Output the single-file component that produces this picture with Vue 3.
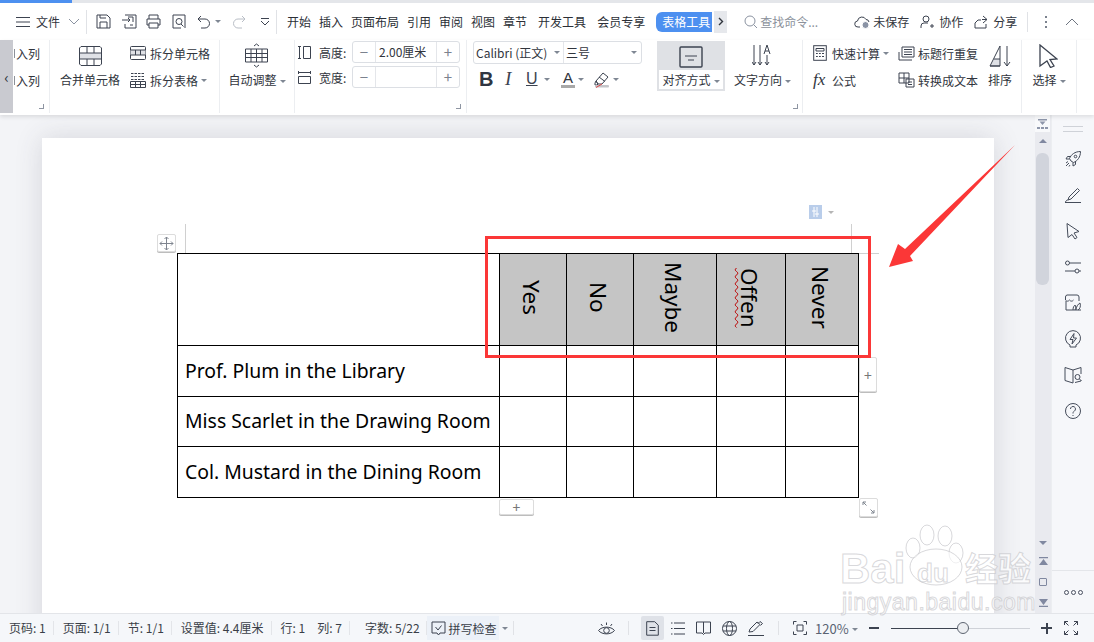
<script setup>
const menus = ['开始', '插入', '页面布局', '引用', '审阅', '视图', '章节']
const menus2 = ['开发工具', '会员专享']
const headers = ['Yes', 'No', 'Maybe', 'Offen', 'Never']
const rows = ['Prof. Plum in the Library', 'Miss Scarlet in the Drawing Room', 'Col. Mustard in the Dining Room']
const colWidths = [322, 67, 67, 83, 69, 73]
</script>

<template>
  <div class="app">
    <div class="tabstrip"><span class="tab-active"></span></div>

    <header class="menubar">
      <svg class="ic ham" width="14" height="10" viewBox="0 0 14 10"><path d="M0 .5h14M0 5h14M0 9.500h14" /></svg>
      <span class="file">文件</span>
      <svg class="ic chev" width="12" height="7" viewBox="0 0 12 7"><path d="M1 1l5 5 5-5" /></svg>
      <i class="vsep first"></i>
      <svg class="ic q-a" width="15" height="15" viewBox="0 0 15 15"><path d="M1 1h10l3 3v10H1zM4 14V8h7v6M4 1v3h6" /></svg>
      <svg class="ic q-b" width="15" height="15" viewBox="0 0 15 15"><path d="M3 1h11v13H3V10M0 6h8M6 4l2 2-2 2M6 3h5v5M8 11h3" /></svg>
      <svg class="ic q-a" width="15" height="15" viewBox="0 0 15 15"><path d="M3 5V1h9v4M3 11H1V5h13v6h-2M3 9h9v5H3z" /></svg>
      <svg class="ic q-b" width="14" height="15" viewBox="0 0 14 15"><path d="M9 14H1V1h12v13" /><circle cx="7" cy="7.500" r="3" /><path d="M9 10l2.500 2.500" /></svg>
      <svg class="ic undo" width="14" height="14" viewBox="0 0 14 14"><path d="M4 1L1 4l3 3M1 4h7a4.500 4.500 0 0 1 0 9H4" /></svg>
      <i class="caret undo-caret"></i>
      <svg class="ic redo" width="14" height="14" viewBox="0 0 14 14"><path d="M10 1l3 3-3 3M13 4H6a4.500 4.500 0 0 0 0 9h4" /></svg>
      <svg class="ic more" width="10" height="8" viewBox="0 0 10 8"><path d="M1 .5h8M1 3l4 4 4-4" /></svg>
      <i class="vsep second"></i>
      <nav class="tabs">
        <span v-for="m in menus" :key="m">{{ m }}</span>
        <span v-for="m in menus2" :key="m" class="wide">{{ m }}</span>
      </nav>
      <span class="tool-tab">表格工具</span>
      <span class="tool-next">
        <svg class="ic dark" width="6" height="9" viewBox="0 0 6 9"><path d="M1 1l3.500 3.500L1 8" /></svg>
      </span>
      <span class="search">
        <svg class="ic grey" width="14" height="14" viewBox="0 0 14 14"><circle cx="6" cy="6" r="5" /><path d="M9.500 9.500L13 13" /></svg>
        查找命令...
      </span>
      <span class="act first-act">
        <svg class="ic" width="17" height="14" viewBox="0 0 17 14"><path d="M6 12H4a3 3 0 0 1-.5-6A4.500 4.500 0 0 1 12 4.500a3 3 0 0 1 3 2.500" /><circle class="filled" cx="11.500" cy="10" r="3.500" /></svg>
        未保存
      </span>
      <span class="act">
        <svg class="ic" width="14" height="14" viewBox="0 0 14 14"><circle cx="6" cy="4" r="3" /><path d="M1 13v-2a3 3 0 0 1 3-3h4M10 11h4M12 9v4" /></svg>
        协作
      </span>
      <span class="act">
        <svg class="ic" width="14" height="14" viewBox="0 0 14 14"><path d="M1 13V8l3-3h3M9 1l4 3.500L9 8M13 4.500H8M1 13h11V9" /></svg>
        分享
      </span>
      <i class="vsep third"></i>
      <span class="kebab"><b></b><b></b><b></b></span>
      <svg class="ic up" width="14" height="8" viewBox="0 0 14 8"><path d="M1 7l6-6 6 6" /></svg>
    </header>

    <section class="ribbon">
      <div class="scroll-left">‹</div>

      <div class="grp g1">
        <div class="rows">
          <div class="row cut">入列</div>
          <div class="row cut">入列</div>
        </div>
        <i class="launcher"></i>
      </div>

      <div class="grp g2">
        <div class="big merge">
          <div class="big-ico">
            <svg class="ic" width="23" height="20" viewBox="0 0 23 20"><rect class="tint" x=".5" y="7" width="22" height="6" /><path d="M2 .5h19l1.500 1.500v16L21 19.500H2L.5 18V2zM.5 7h22M.5 13h22M8 .5V7M15 .5V7M8 13v6.500M15 13v6.500" /></svg>
          </div>
          <div class="lbl">合并单元格</div>
        </div>
        <div class="rows">
          <div class="row">
            <svg class="ic sm" width="16" height="14" viewBox="0 0 16 14"><rect x=".5" y=".5" width="15" height="13" rx="1" /><rect class="tint" x=".5" y="4" width="15" height="5" /><path d="M.5 4h15M.5 9h15M5.500 4v5M10.500 4v5" /></svg>
            拆分单元格
          </div>
          <div class="row">
            <svg class="ic sm" width="16" height="15" viewBox="0 0 16 15"><path d="M1 .5h14M1 3.500h14M1 6.500h14" stroke-dasharray="2.500 1" /><path d="M.5 8.500h15v6H.5zM.5 11.500h15M5.500 8.500v6M10.500 8.500v6" /></svg>
            拆分表格<i class="caret"></i>
          </div>
        </div>
      </div>

      <div class="grp g3">
        <div class="big auto">
          <div class="big-ico">
            <svg class="ic" width="23" height="25" viewBox="0 0 23 25"><path d="M9 3l2.500-2L14 3M9 22l2.500 2L14 22M.5 6h22v13H.5zM.5 10.500h22M.5 14.500h22M6 6v13M11.500 6v13M17 6v13" /></svg>
          </div>
          <div class="lbl">自动调整<i class="caret"></i></div>
        </div>
      </div>

      <div class="grp g4">
        <div class="rows">
          <div class="row">
            <svg class="ic sm" width="13" height="13" viewBox="0 0 13 13"><path d="M0 .5h3M1.500.5v12M0 12.500h3M5.500.5h7v12h-7z" /></svg>
            <span class="fld">高度:</span>
            <span class="stepper">
              <b class="st">−</b><span class="val">2.00厘米</span><b class="st">+</b>
            </span>
          </div>
          <div class="row">
            <svg class="ic sm" width="13" height="13" viewBox="0 0 13 13"><path d="M.5 0v3M12.500 0v3M.5 1.500h12M.5 5.500h12v7H.5z" /></svg>
            <span class="fld">宽度:</span>
            <span class="stepper">
              <b class="st">−</b><span class="val"></span><b class="st">+</b>
            </span>
          </div>
        </div>
        <i class="launcher"></i>
      </div>

      <div class="grp g5">
        <div class="fontcol">
          <div class="combo">
            <span class="cb-name">Calibri (正文)<i class="caret"></i></span>
            <span class="cb-size">三号<i class="caret"></i></span>
          </div>
          <div class="fmt">
            <b class="f-b">B</b>
            <i class="f-i">I</i>
            <span class="f-u">U</span><i class="caret flat"></i>
            <span class="f-a">A</span><i class="caret"></i>
            <svg class="ic hl" width="16" height="17" viewBox="0 0 16 17"><path d="M2 10l7-8 5 4-6 7H4zM5 6l6 4.500" /><path d="M1 12l1-2 2 3-1 1H1z" /><rect class="bar" x="1" y="14" width="14" height="2.500" rx="1" /><path class="red" d="M2 16.500L8 13" /></svg><i class="caret"></i>
          </div>
        </div>
        <div class="big align-btn">
          <div class="big-ico">
            <svg class="ic" width="24" height="22" viewBox="0 0 24 22"><rect x="1" y="1" width="22" height="20" rx="1" stroke-width="1.400" /><path d="M6 10h12M9 14h6" /></svg>
          </div>
          <div class="lbl white">对齐方式<i class="caret"></i></div>
        </div>
        <div class="big dir">
          <div class="big-ico dir-ico">
            <svg class="ic" width="20" height="23" viewBox="0 0 20 23"><path d="M2 1v20M0 18l2 3 2-3M8 1v20M6 18l2 3 2-3M15 11v10M13 18l2 3 2-3" /><path d="M12 10l3-9 3 9M13 7h4" /></svg>
          </div>
          <div class="lbl">文字方向<i class="caret"></i></div>
        </div>
        <i class="launcher l5"></i>
      </div>

      <div class="grp g6">
        <div class="rows c1">
          <div class="row">
            <svg class="ic sm" width="14" height="16" viewBox="0 0 14 16"><rect x=".7" y=".7" width="12.600" height="14.600" /><path d="M3 3.500h8v2.500H3zM3 8.500h1.800M6 8.500h1.800M9 8.500h2M3 11.500h1.800M6 11.500h1.800M9 11.500h2" /></svg>
            快速计算<i class="caret"></i>
          </div>
          <div class="row">
            <span class="fx">fx</span>
            公式
          </div>
        </div>
        <div class="rows c2">
          <div class="row">
            <svg class="ic sm" width="17" height="15" viewBox="0 0 17 15"><path d="M4 1h12v10H4zM6 3.500h8M6 6h8M6 8.500h8M1 6v8h13" /></svg>
            标题行重复
          </div>
          <div class="row">
            <svg class="ic sm" width="17" height="16" viewBox="0 0 17 16"><path d="M1 1h10v10H1zM6 1v10M1 6h10M8 7h8v8H8zM10 10h4M10 12.500h4" /></svg>
            转换成文本
          </div>
        </div>
        <div class="big sort">
          <div class="big-ico">
            <svg class="ic" width="23" height="22" viewBox="0 0 23 22"><path class="tint" d="M5 14h6v7H1.500z" /><path d="M1 21L11 1v20zM1 21h10M11 14H5M18 1v20M15 17l3 4 3-4" /></svg>
          </div>
          <div class="lbl">排序</div>
        </div>
      </div>

      <div class="grp g7">
        <div class="big">
          <div class="big-ico">
            <svg class="ic" width="19" height="24" viewBox="0 0 19 24"><path d="M1 1l17 14-7 .5 4 6.500-3.500 1.500L8 17l-7 5z" stroke-width="1.300" /></svg>
          </div>
          <div class="lbl">选择<i class="caret"></i></div>
        </div>
      </div>
    </section>

    <main class="main">
      <div class="canvas">
        <div class="page">
          <table class="doc">
            <colgroup>
              <col v-for="(w, i) in colWidths" :key="i" :style="{ width: w + 'px' }" />
            </colgroup>
            <tbody>
              <tr class="head">
                <td></td>
                <td v-for="h in headers" :key="h" class="vcell">
                  <span :class="['vtext', { wavy: h === 'Offen' }]">{{ h }}</span>
                </td>
              </tr>
              <tr v-for="(r, i) in rows" :key="r" :class="i === 1 ? 'r50' : 'r51'">
                <td class="name">{{ r }}</td>
                <td v-for="h in headers" :key="h"></td>
              </tr>
            </tbody>
          </table>

          <i class="guide gl"></i>
          <i class="guide gr"></i>
          <i class="guide gh"></i>

          <div class="handle move">
            <svg class="ic soft" width="15" height="15" viewBox="0 0 15 15"><path d="M7.500 1v13M1 7.500h13M5.500 3l2-2 2 2M5.500 12l2 2 2-2M3 5.500l-2 2 2 2M12 5.500l2 2-2 2" /></svg>
          </div>
          <div class="handle addcol">+</div>
          <div class="handle addrow">+</div>
          <div class="handle resize">
            <svg class="ic soft" width="13" height="13" viewBox="0 0 13 13"><path d="M1 1l3.500 3.500M1 4V1h3M12 12L8.500 8.500M12 9v3H9" /></svg>
          </div>
          <div class="layout-ico">
            <svg width="13" height="14" viewBox="0 0 13 14"><rect width="13" height="14" fill="#b9cdea" /><path d="M5 2v10M8 2v10M3 6h4M6 9h4" stroke="#fff" stroke-width="1" fill="none" /></svg>
            <i class="caret"></i>
          </div>
        </div>
      </div>

      <div class="vscroll">
        <div class="vtop">
          <svg width="11" height="10" viewBox="0 0 11 10"><path d="M1 0h9v1.500H1zM2.500 2.500h6L5.500 6zM0 8h3v2H0zM4 8h3v2H4zM8 8h3v2H8z" fill="#8e96aa" /></svg>
        </div>
        <i class="tri up-t"></i>
        <div class="thumb"></div>
        <div class="vbottom">
          <i class="tri down-t"></i>
          <svg width="9" height="9" viewBox="0 0 9 9"><path d="M0 0h9v1.200H0zM4.500 2L9 8H0z" fill="#8088a0" /></svg>
          <i class="sq"></i>
          <svg width="9" height="9" viewBox="0 0 9 9"><path d="M0 7.800h9V9H0zM4.500 7L0 1h9z" fill="#8088a0" /></svg>
        </div>
      </div>

      <aside class="side">
        <div class="grip"></div>
        <svg class="ic si" width="18" height="18" viewBox="0 0 18 18"><path d="M7 11L5.500 8.500C7 4.500 11 1.500 16.500 1.500 16.500 7 13.500 11 9.500 12.500zM6.500 6.500H3.500L2 9h3.500M11.500 11.500V14.500L9 16v-3.500" /><circle cx="11.500" cy="6.500" r="1.300" /><path d="M2 13l2-1.500M2 16l3-3M5 16.500l1-1.500" /></svg>
        <svg class="ic si" width="18" height="18" viewBox="0 0 18 18"><path d="M4 14l1-3L13.500 2.500l2 2L7 13zM4 14c-1 0-2 .5-2.500 2M1 16.500h16" /></svg>
        <svg class="ic si" width="18" height="18" viewBox="0 0 18 18"><path d="M3 1.500l12 8-5 1.500 3 4.500-2 1.500-3-4.500L4 15.500z" /></svg>
        <svg class="ic si" width="18" height="18" viewBox="0 0 18 18"><circle cx="3.500" cy="5" r="2" /><circle cx="13" cy="13" r="2" /><path d="M5.500 5H17M1 13h10M15 13h2" /></svg>
        <svg class="ic si" width="18" height="18" viewBox="0 0 18 18"><path d="M3 1h10a2 2 0 0 1 2 2v4M1.500 6V3A2 2 0 0 1 3 1M1.500 6c1 1.500 3 1.500 4 0 1 1.500 3 1.500 4 0M2 7v9h6" /><path d="M9 16c0-3 1-4 2-5 1 1 1 3 0 5M12 16c0-3 2-6 4-7 1 3 0 6-2 7M8 16h9" /></svg>
        <svg class="ic si" width="18" height="18" viewBox="0 0 18 18"><path d="M6 15a7.500 7.500 0 1 1 6 0v2H6zM10 3.500L6 9.500h3l-1 4.500 4.500-6H9.500z" /></svg>
        <svg class="ic si" width="18" height="18" viewBox="0 0 18 18"><path d="M9 4L1 1.500v13L9 17V4M9 4l8-2.500V8M17 14.500v.5L11 16.500" /><circle cx="13.500" cy="11" r="2.500" /><path d="M15.500 13l2 2" /></svg>
        <svg class="ic si" width="18" height="18" viewBox="0 0 18 18"><circle cx="9" cy="9" r="7.500" /><path d="M6.500 7a2.500 2.500 0 1 1 3.800 2.100C9.400 9.700 9 10.200 9 11.500M9 13v1" /></svg>
        <div class="side-foot"><i></i><i></i><i></i></div>
      </aside>
    </main>

    <footer class="status">
      <span class="s s-first">页码: 1</span>
      <span class="s">页面: 1/1</span>
      <span class="s">节: 1/1</span>
      <span class="s">设置值: 4.4厘米</span>
      <span class="s s-row">行: 1</span>
      <span class="s">列: 7</span>
      <span class="s s-count">字数: 5/22</span>
      <span class="spell">
        <svg class="ic" width="15" height="15" viewBox="0 0 15 15"><path d="M1 1h13v11H9l-1.500 2L6 12H1zM4.500 6l2.500 3 3.500-4.500" /></svg>
        拼写检查
      </span>
      <i class="caret spell-caret"></i>
      <i class="ssep"></i>
      <span class="grow"></span>
      <svg class="ic st-eye" width="17" height="15" viewBox="0 0 17 15"><path d="M.5 9.500C4 5 13 5 16.500 9.500 13 14 4 14 .5 9.500z" /><circle cx="8.500" cy="9.500" r="2.800" /><path d="M3 3l1.500 2M8.500 1.500V4M14 3l-1.500 2" /></svg>
      <i class="ssep s-eye"></i>
      <span class="view-on">
        <svg class="ic" width="13" height="15" viewBox="0 0 13 15"><path d="M.7.700h8l3.600 3.500v10H.7zM3.500 6.500h6M3.500 9.500h6" /></svg>
      </span>
      <svg class="ic st-v" width="14" height="13" viewBox="0 0 14 13"><path d="M3 1h11M0 1h1.500M3 6.500h11M0 6.500h1.500M3 12h11M0 12h1.500" /></svg>
      <svg class="ic st-v" width="15" height="14" viewBox="0 0 15 14"><path d="M.5 1h14v11H9l-1.500 1.500L6 12H.5zM7.500 1v11" /></svg>
      <svg class="ic st-v" width="15" height="15" viewBox="0 0 15 15"><circle cx="7.500" cy="7.500" r="7" /><ellipse cx="7.500" cy="7.500" rx="3" ry="7" /><path d="M1 5h13M1 10h13" /></svg>
      <svg class="ic st-v" width="16" height="15" viewBox="0 0 16 15"><path d="M1 11l1-3 7-7 3 2.500-7 7zM0 14.500h16M10 2.500l2-2 2.500 2-2 2" /></svg>
      <i class="ssep s-views"></i>
      <svg class="ic st-fit" width="14" height="14" viewBox="0 0 14 14"><path d="M.5 3.500v-3h3M10.500.5h3v3M13.500 10.500v3h-3M3.500 13.500h-3v-3M4 4h6v6H4z" /></svg>
      <span class="zoom">120%<i class="caret"></i></span>
      <i class="minus"></i>
      <div class="slider"><i class="knob"></i></div>
      <span class="plus"></span>
      <svg class="ic st-full" width="14" height="14" viewBox="0 0 14 14"><path d="M.5 4V.5H4M.5.500L4.500 4.500M10 .5h3.500V4M13.500.5l-4 4M13.500 10v3.500H10M13.500 13.500l-4-4M4 13.500H.5V10M.5 13.500l4-4" /></svg>
    </footer>

    <!-- annotations and watermark lie over the captured UI -->
    <div class="redbox"></div>
    <svg class="arrow" width="130" height="126" viewBox="0 0 130 126"><polygon points="126,1 16,105 9,100 0,123 24,117 21,112" fill="#fb3737" /></svg>
    <div class="wm">
      <svg class="paw" width="62" height="70" viewBox="0 0 62 70">
        <ellipse cx="9" cy="28" rx="7" ry="10" /><ellipse cx="23" cy="15" rx="7" ry="10" /><ellipse cx="41" cy="16" rx="7" ry="10" /><ellipse cx="52" cy="33" rx="7" ry="10" /><ellipse cx="32" cy="47" rx="26" ry="18" />
      </svg>
      <span class="wm-a">Bai</span><span class="wm-d">du</span><span class="wm-c">经验</span>
      <span class="wm-u">jingyan.baidu.com</span>
    </div>
  </div>
</template>

<style>
html, body { margin: 0; padding: 0; background: #fff; }
</style>

<style scoped>
.app {
  position: relative; width: 1094px; height: 642px; overflow: hidden;
  display: flex; flex-direction: column; background: #fff;
  font-family: "Noto Sans CJK SC", "Noto Sans", sans-serif; font-size: 12px; color: #31353d;
}
i { font-style: normal; }
.ic { fill: none; stroke: #3c4350; stroke-width: 1; flex: none; display: block; }
.ic .tint, .tint { fill: #dfe1e6; stroke: none; }
.ic .filled { fill: #8a93a5; stroke: #fff; }
.ic .bar { fill: #c4c5c9; stroke: none; }
.ic .red { stroke: #e0484a; }
.ic.grey { stroke: #8b93a1; }
.ic.dark { stroke: #2f343c; stroke-width: 1.4; }
.ic.soft { stroke: #7f858f; }
.caret { display: inline-block; width: 0; height: 0; border: 3px solid transparent; border-top: 3.500px solid #7f8793; border-bottom: 0; margin-left: 3px; vertical-align: middle; flex: none; }
.caret.flat { margin-left: 0; }

.tabstrip { height: 3px; background: #e4e6ea; flex: none; }
.tab-active { display: block; width: 72px; height: 3px; background: #4d90f0; }

.menubar { height: 37px; flex: none; display: flex; align-items: center; background: #fff; position: relative; }
.ham { margin-left: 16px; }
.file { margin-left: 6px; width: 24px; }
.chev { margin-left: 8px; stroke: #8b93a1; }
.vsep { width: 1px; height: 24px; background: #e0e2e6; flex: none; }
.vsep.first { margin-left: 6px; }
.q-a { margin-left: 9px; }
.q-b { margin-left: 11px; }
.undo { margin-left: 11px; }
.undo-caret { margin-left: 4px; }
.redo { margin-left: 11px; stroke: #b9bec6; }
.more { margin-left: 14px; }
.vsep.second { margin-left: 6px; }
.tabs { display: flex; margin-left: 10px; gap: 8px; white-space: nowrap; color: #2b2f36; }
.tabs .wide { margin-left: 3px; }
.tool-tab { margin-left: 11px; width: 56px; box-sizing: border-box; padding-left: 6px; height: 20px; line-height: 20px; white-space: nowrap; color: #fff; background: #4d90f0; border-radius: 6px 0 0 6px; }
.tool-next { margin-left: 2px; width: 13px; height: 22px; background: #e6e8ec; display: flex; align-items: center; justify-content: center; }
.search { margin-left: 17px; display: flex; align-items: center; gap: 2px; color: #8b919b; width: 110px; flex: none; white-space: nowrap; }
.act { display: flex; align-items: center; gap: 5px; margin-left: 11px; white-space: nowrap; }
.act.first-act { margin-left: 0; gap: 2px; }
.vsep.third { margin-left: 10px; height: 20px; }
.kebab { margin-left: 17px; display: flex; flex-direction: column; gap: 3px; }
.kebab b { width: 2px; height: 2px; background: #7b828e; display: block; }
.up { margin-left: 18px; stroke: #6d7480; }

.ribbon { height: 75px; flex: none; display: flex; background: #fff; position: relative; z-index: 2; box-shadow: 0 2px 4px rgba(0, 0, 0, .1); }
.scroll-left { width: 13px; height: 73px; background: #c9cad0; text-align: center; line-height: 73px; font-size: 15px; color: #2f343c; flex: none; }
.grp { display: flex; position: relative; height: 73px; border-right: 1px solid #eceef1; box-sizing: border-box; flex: none; }
.rows { display: flex; flex-direction: column; padding-top: 2px; }
.row { height: 22px; margin-bottom: 5px; display: flex; align-items: center; white-space: nowrap; }
.row .sm { margin-right: 4px; }
.cut::before { content: ""; width: 1px; height: 9px; background: #8c9098; margin: 0 1px 0 1px; }
.launcher { position: absolute; right: 5px; bottom: 4px; width: 4px; height: 4px; border-right: 1.500px solid #8e95a2; border-bottom: 1.500px solid #8e95a2; }
.big { display: grid; grid-template-rows: 29px 22px; justify-items: center; }
.big-ico { display: flex; align-items: center; justify-content: center; height: 29px; padding-top: 2px; box-sizing: border-box; }
.lbl { line-height: 22px; white-space: nowrap; }

.g1 { width: 37px; }
.g2 { width: 170px; padding-left: 4px; }
.merge { width: 72px; }
.g2 .rows { margin-left: 4px; }
.g3 { width: 75px; justify-content: center; }
.g4 { width: 172px; padding-left: 3px; }
.g4 .row { margin-bottom: 3px; }
.g4 .rows { padding-top: 1px; }
.g4 .row .sm { margin-right: 0; }
.fld { margin-left: 8px; width: 33px; }
.stepper { width: 108px; height: 22px; box-sizing: border-box; border: 1px solid #dcdfe4; border-radius: 3px; display: flex; align-items: center; }
.st { width: 22px; height: 20px; line-height: 19px; text-align: center; color: #7b828e; font-size: 15px; font-weight: 400; flex: none; }
.val { flex: 1; height: 20px; line-height: 20px; border-left: 1px solid #e4e6ea; border-right: 1px solid #e4e6ea; padding-left: 3px; }

.g5 { width: 336px; padding-left: 6px; }
.fontcol { width: 169px; flex: none; }
.combo { margin-top: 1px; height: 23px; box-sizing: border-box; border: 1px solid #dcdfe4; border-radius: 3px; display: flex; }
.cb-name { width: 90px; padding-left: 2px; padding-right: 3px; border-right: 1px solid #e4e6ea; white-space: nowrap; box-sizing: border-box; display: flex; align-items: center; justify-content: space-between; }
.cb-size { flex: 1; padding: 0 4px 0 2px; display: flex; align-items: center; justify-content: space-between; }
.fmt { display: flex; align-items: center; height: 26px; margin-top: 2px; padding-left: 6px; }
.f-b { font: 700 20px "Liberation Sans", sans-serif; width: 26px; color: #2f3541; flex: none; }
.f-i { font: italic 400 19px "Liberation Serif", serif; width: 21px; color: #3c4350; flex: none; }
.f-u { font: 400 16px "Liberation Sans", sans-serif; text-decoration: underline; color: #3c4350; width: 18px; flex: none; }
.f-a { font: 400 15px "Liberation Sans", sans-serif; margin-left: 11px; border-bottom: 3px solid #a8a8a8; line-height: 14px; width: 14px; text-align: center; flex: none; }
.hl { margin-left: 10px; }
.align-btn { margin: 1px 0 0 15px; width: 68px; height: 50px; background: #dfe1e5; grid-template-rows: 29px 19px; flex: none; }
.align-btn .lbl { background: #fff; width: 64px; line-height: 19px; text-align: center; }
.dir { margin-left: 9px; width: 57px; flex: none; }
.dir-ico { padding-right: 2px; }
.l5 { right: 4px; }
.g6 { width: 219px; padding-left: 10px; }
.c1 { width: 85px; flex: none; }
.c1 .sm { margin-right: 5px; }
.fx { font: italic 400 17px "Liberation Serif", serif; width: 19px; }
.c2 { width: 90px; flex: none; }
.c2 .sm { margin-right: 3px; }
.sort { width: 24px; flex: none; }
.g7 { width: 55px; justify-content: center; }

.main { flex: 1; min-height: 0; display: flex; }
.canvas { flex: 1; min-width: 0; background: #f3f4f7; overflow: hidden; }
.page {
  position: relative; box-sizing: border-box; width: 952px; height: 600px; margin: 23px 0 0 42px; padding: 115px 0 0 135px;
  background: #fff; box-shadow: 0 0 26px rgba(60, 65, 80, .16);
}
.doc { border-collapse: collapse; table-layout: fixed; width: 681px; font-family: "Noto Sans", sans-serif; color: #000; }
.doc td { border: 1px solid #000; padding: 0; box-sizing: border-box; }
.head { height: 92px; }
.r51 { height: 51px; }
.r50 { height: 50px; }
.vcell { background: #c5c5c5; text-align: center; vertical-align: middle; padding-right: 4px !important; }
.vtext { writing-mode: vertical-rl; font-size: 22.500px; line-height: 24px; display: inline-block; }
.wavy { text-decoration: underline wavy #b00; text-decoration-thickness: .5px; text-underline-offset: -1px; text-underline-position: left; }
.doc .name { padding: 0 0 2px 7px; font-size: 19.400px; white-space: nowrap; overflow: hidden; }
.guide { position: absolute; background: #d0d0d0; }
.gl { left: 143px; top: 86px; width: 1px; height: 29px; }
.gr { left: 809px; top: 86px; width: 1px; height: 29px; }
.gh { left: 817px; top: 115px; width: 20px; height: 1px; }
.handle { position: absolute; box-sizing: border-box; background: #fff; border: 1px solid #dcdcdc; border-radius: 2px; display: flex; align-items: center; justify-content: center; box-shadow: 0 1px 0 #bdbdbd; color: #777; font-size: 14px; }
.move { left: 115px; top: 96px; width: 19px; height: 18px; }
.addcol { left: 817px; top: 219px; width: 18px; height: 35px; }
.addrow { left: 457px; top: 361px; width: 35px; height: 16px; }
.resize { left: 817px; top: 360px; width: 19px; height: 19px; }
.layout-ico { position: absolute; left: 767px; top: 67px; display: flex; align-items: center; gap: 6px; }
.layout-ico .caret { border-top-color: #b5b5b5; margin: 0; }

.vscroll { width: 16px; flex: none; background: #e9eaef; position: relative; box-sizing: border-box; padding: 0 2px 0 1px; }
.vtop { height: 17px; margin: 0 -1px 0 -1px; background: #f8f9fb; display: flex; align-items: center; justify-content: center; }
.tri { display: block; width: 0; height: 0; border-left: 4px solid transparent; border-right: 4px solid transparent; }
.up-t { border-bottom: 4px solid #8088a0; margin: 7px auto 10px; }
.down-t { border-top: 4px solid #8088a0; }
.thumb { height: 132px; background: #d1d4dc; border-radius: 6px; }
.vbottom { position: absolute; left: 0; right: 0; bottom: 6px; height: 66px; display: flex; flex-direction: column; align-items: center; justify-content: space-between; }
.sq { width: 6px; height: 6px; border: 1px solid #8088a0; border-radius: 1px; display: block; }

.side { width: 43px; flex: none; background: #f6f7fa; border-left: 1px solid #eceef1; box-sizing: border-box; display: flex; flex-direction: column; align-items: center; position: relative; }
.grip { width: 20px; height: 4px; margin: 11px 0 10px; border-top: 1px solid #cfd2d8; border-bottom: 1px solid #cfd2d8; }
.si { margin: 8px 0 10px; stroke: #454c5a; }
.side-foot { position: absolute; left: 0; right: 0; bottom: 0; height: 42px; border-top: 1px solid #e4e6ea; display: flex; align-items: center; justify-content: center; gap: 2px; }
.side-foot i { width: 3px; height: 3px; border: 1px solid #4a5060; border-radius: 50%; }

.status { height: 29px; flex: none; position: relative; display: flex; align-items: center; background: #f5f7fa; border-top: 1px solid #e3e5e9; box-sizing: border-box; color: #3a3f48; white-space: nowrap; }
.s { border-right: 1px solid #e3e5e9; line-height: 14px; padding-right: 7px; padding-left: 9px; }
.s-row { border-right: 0; padding-right: 3px; }
.s-count { padding-left: 15px; padding-right: 6px; }
.spell { height: 24px; width: 72px; box-sizing: border-box; padding-left: 4px; background: #ecf1f8; display: flex; align-items: center; gap: 3px; flex: none; }
.spell-caret { margin-left: 3px; }
.ssep { width: 1px; height: 14px; background: #e0e2e6; flex: none; margin-left: 5px; }
.grow { flex: 1; }
.st-eye { margin-right: 13px; }
.s-eye { margin-left: 0; margin-right: 12px; }
.view-on { width: 23px; height: 24px; background: #dfe2e8; display: flex; align-items: center; justify-content: center; border-radius: 2px; margin-right: 7px; }
.st-v { margin-right: 11px; }
.s-views { margin: 0 14px 0 3px; }
.st-fit { margin-right: 8px; }
.zoom { color: #5a6372; font-size: 13px; width: 50px; margin-right: 4px; }
.minus { width: 10px; height: 2px; background: #3c4350; flex: none; }
.slider { width: 139px; height: 1px; margin-left: 12px; background: linear-gradient(90deg, #3c4350 52%, #cfd2d8 52%); position: relative; flex: none; }
.knob { position: absolute; left: 66px; top: -6px; width: 10px; height: 10px; border: 1.500px solid #5d6470; background: #eceef1; border-radius: 50%; }
.plus { margin-left: 11px; width: 11px; height: 11px; flex: none; background: linear-gradient(#3c4350, #3c4350) center/100% 2px no-repeat, linear-gradient(#3c4350, #3c4350) center/2px 100% no-repeat; }
.st-full { margin: 0 16px 0 12px; }

.redbox { position: absolute; z-index: 5; left: 485px; top: 236px; width: 386px; height: 122px; box-sizing: border-box; border: 3px solid #fb3737; }
.arrow { position: absolute; z-index: 5; left: 889px; top: 144px; }
.wm { position: absolute; z-index: 6; left: 838px; top: 520px; width: 200px; height: 96px; pointer-events: none; font-family: "Liberation Sans", sans-serif; color: rgba(255, 255, 255, .7); -webkit-text-stroke: 1px rgba(190, 190, 195, .6); line-height: 1; }
.paw { position: absolute; left: 66px; top: 0; fill: rgba(255, 255, 255, .6); stroke: rgba(190, 190, 195, .6); }
.wm-a { position: absolute; left: 2px; top: 28px; font-size: 42px; font-weight: 700; }
.wm-d { position: absolute; left: 79px; top: 40px; font-size: 26px; font-weight: 700; }
.wm-c { position: absolute; left: 127px; top: 31px; font: 700 33px/1 "Noto Sans CJK SC", sans-serif; }
.wm-u { position: absolute; left: 4px; top: 71px; font-size: 23px; letter-spacing: .5px; white-space: nowrap; }
</style>
